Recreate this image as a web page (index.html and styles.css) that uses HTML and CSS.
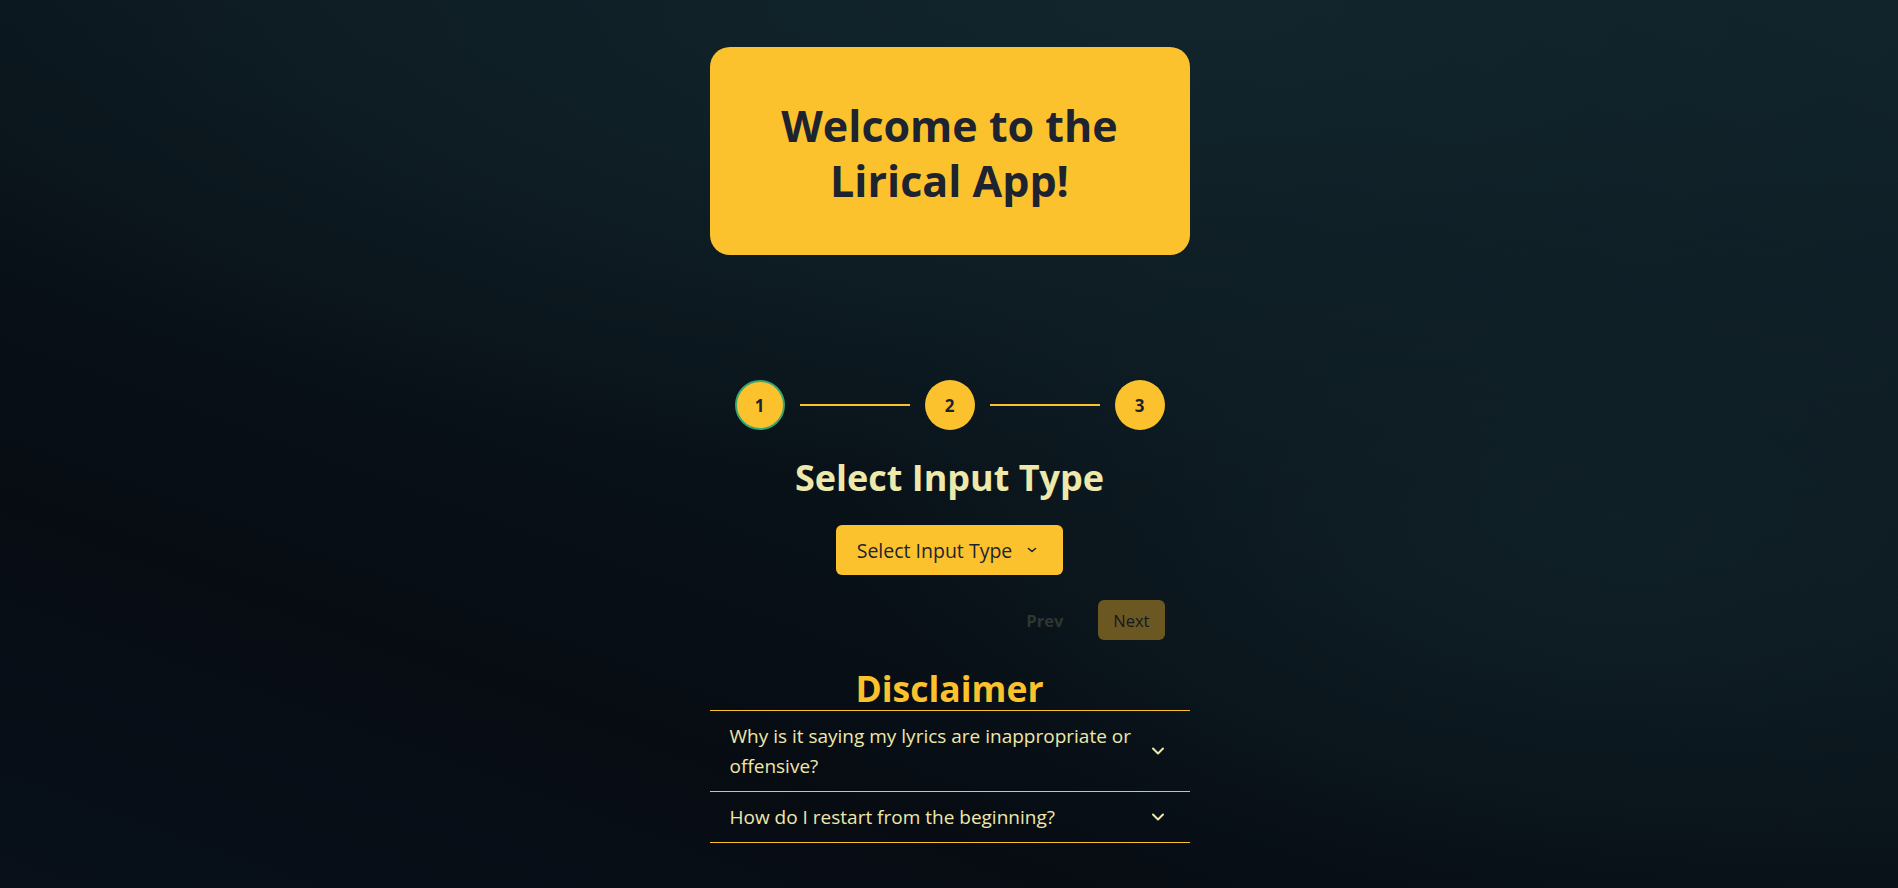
FILE: index.html
```html
<!DOCTYPE html>
<html lang="en">
<head>
<meta charset="utf-8">
<title>Lirical App</title>
<link rel="stylesheet" href="styles.css">
</head>
<body>
<main class="app">
  <section class="welcome">
    <h1 class="welcome-title">Welcome to the<br>Lirical App!</h1>
  </section>

  <section class="wizard">
    <div class="stepper">
      <div class="step step-active">1</div>
      <div class="step-line"></div>
      <div class="step">2</div>
      <div class="step-line"></div>
      <div class="step">3</div>
    </div>
    <h2 class="wizard-title">Select Input Type</h2>
    <button class="select-btn" type="button">
      <span>Select Input Type</span>
      <svg class="select-chevron" viewBox="0 0 12 8" width="12" height="8" aria-hidden="true"><path d="M2.5 2.5 L6 5.5 L9.5 2.5" fill="none" stroke="currentColor" stroke-width="1.6" stroke-linecap="round" stroke-linejoin="round"/></svg>
    </button>
    <div class="wizard-nav">
      <button class="nav-prev" type="button">Prev</button>
      <button class="nav-next" type="button">Next</button>
    </div>
  </section>

  <section class="disclaimer">
    <h2 class="disclaimer-title">Disclaimer</h2>
    <div class="faq">
      <div class="faq-item">
        <span class="faq-question">Why is it saying my lyrics are inappropriate or offensive?</span>
        <svg class="faq-chevron" viewBox="0 0 16 10" width="16" height="10" aria-hidden="true"><path d="M3 2.5 L8 7.5 L13 2.5" fill="none" stroke="currentColor" stroke-width="2" stroke-linecap="round" stroke-linejoin="round"/></svg>
      </div>
      <div class="faq-item">
        <span class="faq-question">How do I restart from the beginning?</span>
        <svg class="faq-chevron" viewBox="0 0 16 10" width="16" height="10" aria-hidden="true"><path d="M3 2.5 L8 7.5 L13 2.5" fill="none" stroke="currentColor" stroke-width="2" stroke-linecap="round" stroke-linejoin="round"/></svg>
      </div>
    </div>
  </section>
</main>
</body>
</html>
```

FILE: styles.css
```css
* { box-sizing: border-box; }

html, body {
  margin: 0;
  padding: 0;
}

body {
  min-height: 100vh;
  font-family: "Open Sans", "Noto Sans", "Liberation Sans", sans-serif;
  color: #eee8aa;
  background-color: #080d14;
  background-image:
    radial-gradient(ellipse 40% 45% at 85% 58%, rgba(16, 33, 40, 0.9) 0%, rgba(16, 33, 40, 0) 100%),
    radial-gradient(ellipse 75% 55% at 62% 0%, rgba(18, 37, 44, 1) 0%, rgba(18, 37, 44, 0) 100%),
    linear-gradient(200deg, #10222a 0%, #0b161d 40%, #070c13 75%, #08101a 100%);
}

.app {
  display: flex;
  flex-direction: column;
  align-items: center;
  padding: 47px 0 40px 1px;
}

/* Welcome card */
.welcome {
  width: 480px;
  background: #fbc22e;
  border-radius: 20px;
  padding: 51px 20px 47px;
  text-align: center;
}

.welcome-title {
  margin: 0;
  font-size: 43px;
  line-height: 55px;
  font-weight: 700;
  color: #1e2330;
}

/* Wizard */
.wizard {
  margin-top: 125px;
  width: 430px;
  display: flex;
  flex-direction: column;
  align-items: center;
}

.stepper {
  width: 100%;
  display: flex;
  align-items: center;
  gap: 15px;
}

.step {
  width: 50px;
  height: 50px;
  flex: none;
  border-radius: 50%;
  background: #fbc22e;
  color: #1e2330;
  display: flex;
  align-items: center;
  justify-content: center;
  font-size: 17px;
  font-weight: 700;
}

.step-active {
  border: 2px solid #36a672;
}

.step-line {
  flex: 1;
  height: 2px;
  background: #fbc22e;
}

.wizard-title {
  margin: 26px 0 0;
  font-size: 36px;
  line-height: 44px;
  font-weight: 700;
  color: #eee8aa;
}

.select-btn {
  margin-top: 25px;
  height: 50px;
  padding: 0 25px 0 21px;
  display: flex;
  align-items: center;
  gap: 14px;
  background: #fbc22e;
  color: #1e2330;
  border: none;
  border-radius: 6px;
  font-family: inherit;
  font-size: 19.5px;
}

.select-chevron {
  display: block;
}

.wizard-nav {
  margin-top: 25px;
  width: 100%;
  display: flex;
  justify-content: flex-end;
  align-items: center;
  gap: 20px;
}

.nav-prev,
.nav-next {
  height: 40px;
  padding: 0 15px;
  border: none;
  border-radius: 6px;
  font-family: inherit;
  font-size: 16.5px;
}

.nav-prev {
  background: transparent;
  color: #2f3731;
  font-weight: 700;
}

.nav-next {
  background: #6a5722;
  color: #15191d;
}

/* Disclaimer */
.disclaimer {
  margin-top: 27px;
  width: 480px;
}

.disclaimer-title {
  margin: 0;
  text-align: center;
  font-size: 35.5px;
  line-height: 43px;
  font-weight: 700;
  color: #fbc22e;
}

.faq {
  border-top: 1px solid #fbc22e;
}

.faq-item {
  display: flex;
  align-items: center;
  justify-content: space-between;
  padding: 10px 24px 10px 20px;
  border-bottom: 1px solid #fbc22e;
}

.faq-question {
  font-size: 19px;
  line-height: 30px;
  color: #eee8aa;
}

.faq-chevron {
  flex: none;
  color: #eee8aa;
}
```
